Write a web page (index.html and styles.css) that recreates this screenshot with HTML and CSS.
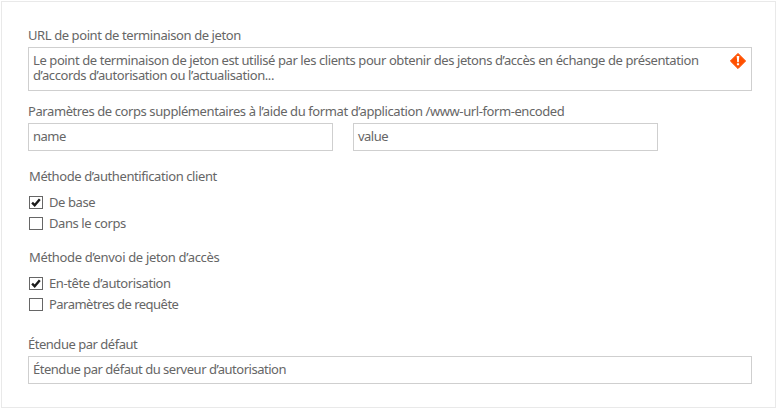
FILE: index.html
```html
<!DOCTYPE html>
<html lang="fr">
<head>
<meta charset="utf-8">
<title>Serveur d’autorisation</title>
<link rel="stylesheet" href="styles.css">
</head>
<body>
<form class="panel">
  <section class="field">
    <div class="label"><span>URL de point de terminaison de jeton</span></div>
    <div class="box multiline">
      <div class="text"><div>Le point de terminaison de jeton est utilisé par les clients pour obtenir des jetons d’accès en échange de présentation</div><div>d’accords d’autorisation ou l’actualisation...</div></div>
      <svg class="alert" width="18" height="18" viewBox="0 0 18 18"><path d="M9 1.4 16.6 9 9 16.6 1.4 9Z" fill="#ff5000" stroke="#ff5000" stroke-linejoin="round"/><path d="M7.7 4h2.6l-.5 6.2H8.2ZM7.9 11.2h2.2v2H7.9Z" fill="#fff"/></svg>
    </div>
  </section>
  <section class="field params">
    <div class="label"><span>Paramètres de corps supplémentaires à l’aide du format d’application /www-url-form-encoded</span></div>
    <div class="row">
      <div class="box"><span class="tight">name</span></div>
      <div class="box"><span class="tight">value</span></div>
    </div>
  </section>
  <section class="group auth">
    <div class="label"><span>Méthode d’authentification client</span></div>
    <div class="option"><i class="check"><svg width="12" height="11" viewBox="0 0 12 11"><path d="M2.1 5.6 4.7 8.3 9.8 2.2" fill="none" stroke="#1b1b1b" stroke-width="2.4"/></svg></i><span>De base</span></div>
    <div class="option"><i class="check"></i><span>Dans le corps</span></div>
  </section>
  <section class="group sending">
    <div class="label"><span>Méthode d’envoi de jeton d’accès</span></div>
    <div class="option"><i class="check"><svg width="12" height="11" viewBox="0 0 12 11"><path d="M2.1 5.6 4.7 8.3 9.8 2.2" fill="none" stroke="#1b1b1b" stroke-width="2.4"/></svg></i><span>En-tête d’autorisation</span></div>
    <div class="option"><i class="check"></i><span class="tight">Paramètres de requête</span></div>
  </section>
  <section class="field scope">
    <div class="label"><span>Étendue par défaut</span></div>
    <div class="box"><span>Étendue par défaut du serveur d’autorisation</span></div>
  </section>
</form>
</body>
</html>
```
FILE: styles.css
```css
* { box-sizing: border-box; }
body { margin: 0; background: #fff; }
.panel {
  width: 775px;
  height: 407px;
  margin: 1px;
  padding: 25px 23px 0 26px;
  border: 1px solid #e9e9e9;
  color: #666;
  font: 13px/16px "Noto Sans", sans-serif;
  letter-spacing: -0.41px;
  white-space: nowrap;
}
.label { height: 16px; }
.box {
  height: 28px;
  padding: 4px;
  border: 1px solid #cfcfcf;
}
.field .label { margin-bottom: 4px; }
.multiline {
  display: flex;
  justify-content: space-between;
  height: 44px;
  line-height: 15px;
  padding: 5px 4px;
}
.alert { flex: none; margin-top: -1px; }
.params { margin-top: 12px; }
.row { display: flex; gap: 20px; }
.row .box { width: 305px; }
.group { padding-left: 1px; }
.auth { margin-top: 17px; }
.option { display: flex; align-items: center; gap: 6px; height: 21px; }
.option span { margin-top: -2px; }
.label + .option { margin-top: 8px; }
.check { width: 14px; height: 13px; border: 1px solid #666; }
.check svg { display: block; }
.sending { margin-top: 15px; }
.sending .label { letter-spacing: -0.33px; }
.scope { margin-top: 21px; letter-spacing: -0.48px; }
.tight { letter-spacing: -0.52px; }
```
